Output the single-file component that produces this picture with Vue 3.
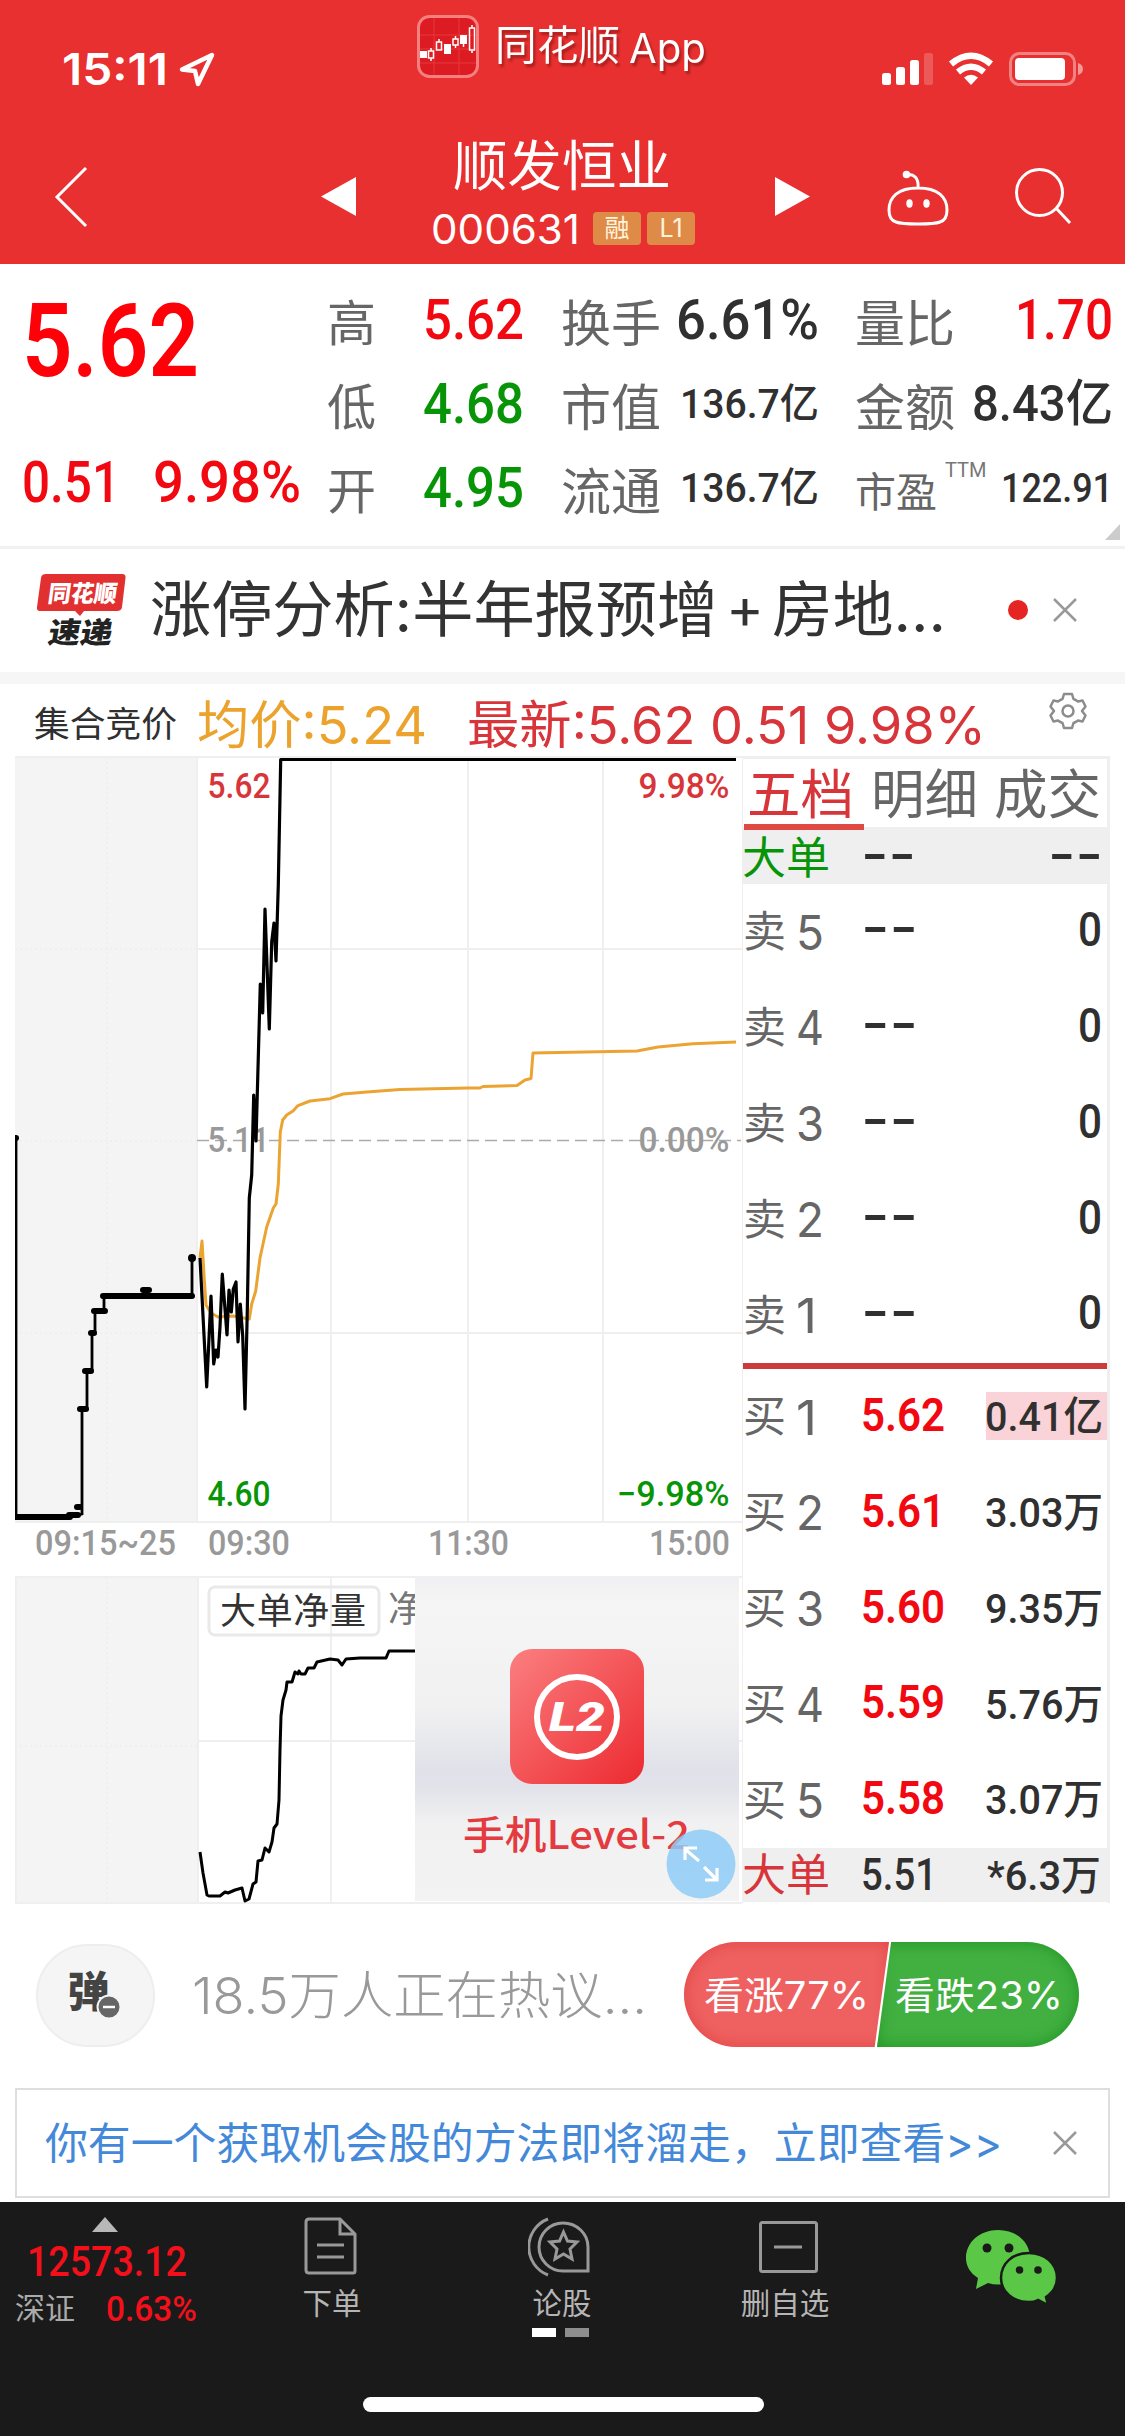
<script setup>
import { h } from 'vue'

// A line of text with a fixed advance width; the box is as tall as its capitals or ideographs.
const Fit = (props) => {
  const size = props.s
  const box = props.cjk ? size * 0.92 : size * 0.72
  const base = props.cjk ? size * 0.84 : size * 0.72
  return h('svg', { class: 'fit', width: props.w, height: box }, [
    h('text', {
      x: 0,
      y: base,
      'font-size': size,
      textLength: props.w,
      lengthAdjust: 'spacingAndGlyphs',
    }, props.t),
  ])
}
Fit.props = ['t', 'w', 's', 'cjk']

const groups = [
  [
    { k: '高', kw: 49, v: '5.62', w: 101, s: 56, c: 'up' },
    { k: '低', kw: 49, v: '4.68', w: 101, s: 56, c: 'down' },
    { k: '开', kw: 49, v: '4.95', w: 101, s: 56, c: 'down' },
  ],
  [
    { k: '换手', kw: 100, v: '6.61%', w: 143, s: 56, c: 'dark' },
    { k: '市值', kw: 100, v: '136.7亿', w: 139, s: 41, c: 'dark' },
    { k: '流通', kw: 100, v: '136.7亿', w: 139, s: 41, c: 'dark' },
  ],
  [
    { k: '量比', kw: 100, v: '1.70', w: 98, s: 56, c: 'up' },
    { k: '金额', kw: 100, v: '8.43亿', w: 141, s: 50, c: 'dark' },
    { k: '市盈', kw: 82, v: '122.91', w: 112, s: 41, c: 'dark', sup: 'TTM' },
  ],
]
const sells = [5, 4, 3, 2, 1]
const buys = [
  { n: 1, p: '5.62', v: '0.41亿', hot: true },
  { n: 2, p: '5.61', v: '3.03万' },
  { n: 3, p: '5.60', v: '9.35万' },
  { n: 4, p: '5.59', v: '5.76万' },
  { n: 5, p: '5.58', v: '3.07万' },
]
const steps = [[192, 1258, 4], [16, 1138, 3]]
const auction = 'M16 1138V1517H70L82 1514V1409H87V1371H92V1333H95V1311H104V1296H192V1258'
const flats = 'M16 1517H70M69 1515H78M77 1507H80M80 1409H86M85 1371H91M91 1333H94M94 1311H105M103 1296H192M143 1290H149'
const price = '200,1258 206.7,1387 211,1296 213.7,1364 216,1350 218,1357 220,1327 222.3,1274 227,1335 229,1290 231.3,1312 233.3,1289 236,1282 238,1342 240.3,1304 242.7,1336 245,1409 247.3,1310 249.3,1198 251.7,1175 253.7,1095 256,1141 258.3,1057 260.3,984 262.7,1013 265,909 267,965 269.3,1029 271.7,942 274,923 276,961 278.3,885 280.7,759.5 736,759.5'
const average = '200,1258 202,1241 204,1275 206,1305 211,1313 218,1317 233,1316 249.3,1319 251.7,1304 255.7,1291 260,1258 266.7,1227 273.3,1208 276,1204 278.3,1184 280.3,1132 282.7,1120 286.7,1115 293,1111 298,1105.6 310,1101 330,1098.7 343,1094 367,1092 400,1089.5 468,1088 480,1088 483,1086.5 517,1085.5 525,1080 531,1078.5 533,1053 637,1051 658,1047 693,1043.7 736,1042'
const netVolume = '200,1852 203,1873 207,1895 209,1896 220,1896 225,1892 228,1893 235,1890 242,1888 245,1901 249,1899 253,1884 256,1882 258,1861 262,1860 265,1848 269,1852 272,1842 274,1828 277,1824 279,1800 280,1750 281,1716 283,1700 286,1690 287,1682 292,1682 295,1672 298,1674 299,1671 301,1674 305,1674 308,1668 314,1668 317,1662 330,1659 338,1660 342,1665 346,1659 360,1658 386,1658 389,1651 415,1651'
</script>

<template>
  <div class="phone">
    <header class="top">
      <div class="status">
        <Fit class="clock" t="15:11" :w="106" :s="44" />
        <svg class="locate" width="38" height="38" viewBox="0 0 38 38"><path d="M34 4L4 18.500L17 20L20 33Z" /></svg>
        <div class="brand">
          <svg width="62" height="63" viewBox="0 0 62 63">
            <rect x="1.500" y="1.500" width="59" height="60" rx="11" fill="#dc1c22" stroke="#f68080" stroke-width="3" />
            <path d="M3 20H59M3 34H59M3 48H59M17 3V60M42 3V60" stroke="#e4383a" />
            <path d="M3 36h7v7h-7zM27 29h7v10h-7zM43 20h7v9h-7z" fill="#fff" />
            <path d="M11.500 36h5v7h-5zM19.500 27h5v8h-5zM36 24h5v6h-5zM52.500 13h5v22h-5zM14 33v3M14 43v3M22 24v3M38.500 21v3M38.500 30v3M55 10v3M55 35v3M46.500 29v3" fill="none" stroke="#fff" stroke-width="1.500" />
          </svg>
          <Fit class="brand-name" t="同花顺" :w="125" :s="41" cjk />
          <Fit class="brand-name app" t="App" :w="77" :s="41" />
        </div>
        <svg class="signals" width="204" height="38" viewBox="880 50 204 38">
          <g fill="#fff">
            <rect x="882" y="73" width="9" height="12" rx="2.500" /><rect x="896" y="67" width="9" height="18" rx="2.500" />
            <rect x="910" y="60" width="9" height="25" rx="2.500" /><rect x="924" y="53" width="9" height="32" rx="2.500" opacity=".2" />
            <rect x="1015" y="58" width="50" height="22" rx="4" /><path d="M1078 63q5 1.500 5 6t-5 6z" opacity=".5" />
            <path d="M971 85l-7-7.500q7-5.500 14 0z" />
          </g>
          <rect x="1010.500" y="53.500" width="64" height="31" rx="9" fill="none" stroke="#fff" stroke-opacity=".4" stroke-width="3" />
          <path d="M951 64Q971 47.500 991 64M958 72Q971 61.500 984 72" fill="none" stroke="#fff" stroke-width="6.500" />
        </svg>
      </div>
      <div class="nav">
        <svg width="36" height="64" viewBox="0 0 36 64" class="line"><path d="M33 3L4 32L33 61" /></svg>
        <svg class="prev" width="35" height="39" viewBox="0 0 35 39"><path d="M35 0V39L0 19.500Z" fill="#fff" /></svg>
        <div class="stock">
          <Fit t="顺发恒业" :w="218" :s="54" cjk />
          <div class="code">
            <Fit t="000631" :w="149" :s="41" />
            <span>融</span><span>L1</span>
          </div>
        </div>
        <svg class="next" width="35" height="39" viewBox="0 0 35 39"><path d="M0 0V39L35 19.500Z" fill="#fff" /></svg>
        <svg class="line bot" width="64" height="60" viewBox="886 168 64 60">
          <path d="M918 188C919 178 914 174 907 174.500M918 188C938 188 947 197 947 210Q947 220 940 222Q935 224 918 224Q901 224 896 222Q889 220 889 210C889 197 898 188 918 188Z" />
          <circle cx="906.500" cy="174.500" r="3.800" fill="#fff" stroke="none" /><ellipse cx="909.500" cy="203.500" rx="3.200" ry="4.200" fill="#fff" stroke="none" /><ellipse cx="926.500" cy="203.500" rx="3.200" ry="4.200" fill="#fff" stroke="none" />
        </svg>
        <svg class="line" width="60" height="60" viewBox="1014 167 60 60"><circle cx="1039.500" cy="192.500" r="23" /><path d="M1056 208L1070 223" /></svg>
      </div>
    </header>

    <section class="quote din">
      <div class="last up">
        <Fit t="5.62" :w="177" :s="102" class="semi" />
        <div class="delta"><Fit t="0.51" :w="98" :s="57" /><Fit t="9.98%" :w="148" :s="57" /></div>
      </div>
      <div v-for="(g, i) in groups" :key="i" class="group">
        <div v-for="r in g" :key="r.k" class="pair">
          <Fit class="label" :t="r.k" :w="r.kw" :s="r.kw / r.k.length" cjk />
          <small v-if="r.sup">{{ r.sup }}</small>
          <Fit :class="r.c" :t="r.v" :w="r.w" :s="r.s" />
        </div>
      </div>
      <i class="corner"></i>
    </section>

    <section class="news">
      <svg class="logo" width="90" height="78" viewBox="37 570 90 78">
        <path d="M46 573H122Q126 573 125.500 577L122 606Q121.500 610 117 610H84L80 615L75 610H40Q36.500 610 37 606L41 577Q41.500 573 46 573Z" fill="#e1302f" />
        <text x="0" y="0" transform="translate(47 601) skewX(-8)" class="mark" fill="#fff" font-size="23.500" textLength="69" lengthAdjust="spacingAndGlyphs">同花顺</text>
        <text x="0" y="0" transform="translate(47 641.500) skewX(-10)" class="mark" fill="#222" font-size="29" textLength="64" lengthAdjust="spacingAndGlyphs">速递</text>
      </svg>
      <div class="headline">
        <Fit t="涨停分析:半年报预增" :w="568" :s="61" cjk />
        <Fit t="+" :w="38" :s="56" cjk />
        <Fit t="房地..." :w="174" :s="61" cjk />
      </div>
      <i class="dot"></i>
      <svg class="x" width="24" height="24" viewBox="0 0 24 24"><path d="M1 1L23 23M23 1L1 23" /></svg>
    </section>

    <section class="legend">
      <Fit class="dark" t="集合竞价" :w="143" :s="35.700" cjk />
      <Fit class="avg" t="均价:5.24" :w="230" :s="52" cjk />
      <Fit class="now" t="最新:5.62 0.51 9.98%" :w="519" :s="52" cjk />
      <svg class="gear" width="38" height="38" viewBox="-19 -19 38 38">
        <path d="M-4 -17H4L5.500 -12Q8 -11 10 -9.500L14.500 -10.500L17.500 -4.500L14 0L17.500 4.500L14.500 10.500L10 9.500Q8 11 5.500 12L4 17H-4L-5.500 12Q-8 11 -10 9.500L-14.500 10.500L-17.500 4.500L-14 0L-17.500 -4.500L-14.500 -10.500L-10 -9.500Q-8 -11 -5.500 -12Z" />
        <circle r="5.500" />
      </svg>
    </section>

    <section class="market">
      <svg width="727" height="1150" viewBox="15 756 727 1150">
        <g fill="#f4f4f4"><rect x="15" y="756" width="182" height="766" /><rect x="15" y="1578" width="182" height="325" /></g>
        <g fill="none" stroke="#efefef" stroke-width="2">
          <path d="M15 757H742M197 949H742M197 1333H742M15 1522H742M197 756V1522M331 756V1522M468 756V1522M603 756V1522" />
          <path d="M15 1577H742M197 1741H742M15 1903H742M198 1577V1903M331 1577V1903M16 1577V1903" />
          <path d="M15 949H197M15 1141H197M15 1333H197M107 757V1522M15 1746H197M107 1577V1903" stroke-dasharray="2 3" />
        </g>
        <path d="M197 1140.500H741" stroke="#aaa" stroke-width="1.600" stroke-dasharray="12 6" />
        <polyline :points="average" fill="none" stroke="#eba432" stroke-width="3" stroke-linejoin="round" />
        <path :d="auction" fill="none" stroke="#000" stroke-width="2.800" />
        <path :d="flats" fill="none" stroke="#000" stroke-width="6" stroke-linecap="round" />
        <circle v-for="p in steps" :key="p[0]" :cx="p[0]" :cy="p[1]" :r="p[2]" />
        <g class="axis">
          <text x="207.500" y="798" class="now" textLength="63" lengthAdjust="spacingAndGlyphs">5.62</text>
          <text x="638.500" y="798" class="now" textLength="91" lengthAdjust="spacingAndGlyphs">9.98%</text>
          <text x="207.500" y="1152" textLength="62" lengthAdjust="spacingAndGlyphs">5.11</text>
          <text x="638.500" y="1152" textLength="91" lengthAdjust="spacingAndGlyphs">0.00%</text>
          <text x="207.500" y="1506" class="down" textLength="63" lengthAdjust="spacingAndGlyphs">4.60</text>
          <text x="617" y="1506" class="down" textLength="112.500" lengthAdjust="spacingAndGlyphs">−9.98%</text>
          <text x="35" y="1555" textLength="141" lengthAdjust="spacingAndGlyphs">09:15~25</text>
          <text x="208" y="1555" textLength="82" lengthAdjust="spacingAndGlyphs">09:30</text>
          <text x="428" y="1555" textLength="81" lengthAdjust="spacingAndGlyphs">11:30</text>
          <text x="649" y="1555" textLength="81" lengthAdjust="spacingAndGlyphs">15:00</text>
        </g>
        <polyline :points="price" fill="none" stroke="#000" stroke-width="3.200" stroke-linejoin="round" />
        <rect x="209" y="1587" width="170" height="48" rx="6" fill="none" stroke="#e9e9e9" stroke-width="3" />
        <g class="cn" font-size="36"><text x="220" y="1624" fill="#333" textLength="146">大单净量</text><text x="388" y="1622" fill="#777">净</text></g>
        <polyline :points="netVolume" fill="none" stroke="#000" stroke-width="3" stroke-linejoin="round" />
        <defs>
          <linearGradient id="haze" x1="0" y1="0" x2="0" y2="1">
            <stop offset="0" stop-color="#f0f0f2" /><stop offset=".08" stop-color="#f5f5f5" /><stop offset=".4" stop-color="#f1f1f2" />
            <stop offset=".6" stop-color="#e0e1e9" /><stop offset=".66" stop-color="#e3e4ea" /><stop offset=".76" stop-color="#f1f1f2" /><stop offset="1" stop-color="#f3f3f3" />
          </linearGradient>
          <linearGradient id="badge" x1="0" y1="0" x2="1" y2="1"><stop offset="0" stop-color="#fb7f80" /><stop offset="1" stop-color="#ec2a30" /></linearGradient>
        </defs>
        <rect x="415" y="1577" width="324" height="324" fill="url(#haze)" />
        <rect x="510" y="1649" width="134" height="135" rx="22" fill="url(#badge)" />
        <circle cx="577" cy="1717" r="40" fill="none" stroke="#fff" stroke-width="6" />
        <text x="549" y="1731" class="l2" textLength="56" lengthAdjust="spacingAndGlyphs">L2</text>
        <text x="463" y="1849" class="cn" fill="#e33b40" font-size="39" font-weight="500" textLength="227" lengthAdjust="spacingAndGlyphs">手机Level-2</text>
        <circle cx="701" cy="1864" r="34.500" fill="#8ecbf7" fill-opacity=".85" />
        <path d="M699 1861L685 1849M685 1860V1848H697M704 1867L717 1880M717 1868V1880H705" fill="none" stroke="#fff" stroke-width="3.200" />
      </svg>

      <div class="book din">
        <div class="tabs">
          <Fit class="tab now" t="五档" :w="107" :s="53.500" cjk />
          <Fit class="tab" t="明细" :w="107" :s="53.500" cjk />
          <Fit class="tab" t="成交" :w="107" :s="53.500" cjk />
          <i></i>
        </div>
        <div class="big first">
          <Fit class="label down" t="大单" :w="88" :s="44" cjk /><Fit class="dash dark" t="--" :w="55" :s="54" /><Fit class="dash dark vol" t="--" :w="55" :s="54" />
        </div>
        <div v-for="n in sells" :key="n" class="level">
          <Fit class="side" t="卖" :w="43" :s="43" cjk /><Fit class="num" :t="n" :w="n === 1 ? 21 : 28" :s="48" /><Fit class="dash dark" t="--" :w="57" :s="54" /><Fit class="vol dark zero" t="0" :w="24" :s="48" />
        </div>
        <div class="split"></div>
        <div v-for="b in buys" :key="b.n" class="level" :class="{ hot: b.hot }">
          <Fit class="side" t="买" :w="43" :s="43" cjk /><Fit class="num" :t="b.n" :w="b.n === 1 ? 21 : 28" :s="48" /><Fit class="semi up price" :t="b.p" :w="84" :s="47" /><span class="vol"><Fit class="dark" :t="b.v" :w="118" :s="41" /></span>
        </div>
        <div class="big">
          <Fit class="label now" t="大单" :w="88" :s="44" cjk /><Fit class="dark price" t="5.51" :w="76" :s="44" /><Fit class="dark vol" t="*6.3万" :w="114" :s="41" />
        </div>
      </div>
    </section>

    <section class="talk">
      <div class="round">
        <b>弹</b>
        <svg width="26" height="26" viewBox="-13 -13 26 26"><circle r="11.500" fill="#666" stroke="#f5f5f5" stroke-width="2" /><path d="M-6 0H6" stroke="#fff" stroke-width="2.500" /></svg>
      </div>
      <Fit class="topic" t="18.5万人正在热议..." :w="455" :s="51" cjk />
      <div class="vote">
        <div class="bull"><Fit t="看涨77%" :w="165" :s="38" cjk /></div>
        <div class="bear"><Fit t="看跌23%" :w="168" :s="38" cjk /></div>
      </div>
    </section>

    <section class="notice">
      <Fit t="你有一个获取机会股的方法即将溜走，立即查看>>" :w="957" :s="43" cjk />
      <svg class="x" width="24" height="24" viewBox="0 0 24 24"><path d="M1 1L23 23M23 1L1 23" /></svg>
    </section>

    <footer class="bar">
      <div class="tools">
        <div class="index din">
          <i></i>
          <Fit t="12573.12" :w="160" :s="42" />
          <div><Fit class="name" t="深证" :w="60" :s="30" cjk /><Fit t="0.63%" :w="91" :s="35" /></div>
        </div>
        <div class="tool order">
          <svg width="54" height="60" viewBox="304 2217 54 60"><path d="M309 2219H340L355 2234V2271Q355 2273 353 2273H309Q306 2273 306 2270V2222Q306 2219 309 2219ZM340 2220V2234H355M317 2245H344M317 2257H344" /></svg>
          <span>下单</span>
        </div>
        <div class="tool talkers">
          <svg width="64" height="60" viewBox="528 2217 64 60"><path d="M548 2219A30 30 0 0 0 548 2275M563 2223A24 24 0 1 0 563 2271H588V2247A25 24 0 0 0 563 2223ZM563.500 2232L567.500 2241L577 2242L570 2249L572 2259L563.500 2254L555 2259L557 2249L550 2242L559.500 2241Z" /></svg>
          <span>论股</span>
          <p><i></i><i></i></p>
        </div>
        <div class="tool remove">
          <svg width="60" height="60" viewBox="758 2217 60 60"><rect x="760.500" y="2222.500" width="56" height="49" rx="2" /><path d="M774 2247H802" /></svg>
          <span>删自选</span>
        </div>
        <svg class="wechat" width="94" height="78" viewBox="964 2228 94 78">
          <path d="M998 2230C980 2230 966 2242 966 2258C966 2266 970 2273 978 2278L976 2289L988 2283Q998 2286 1008 2283L1030 2262C1032 2244 1018 2230 998 2230Z" fill="#5ac846" />
          <path d="M1029 2253C1013 2253 1001 2263 1001 2278C1001 2292 1013 2302 1029 2302Q1034 2302 1038 2300L1048 2305L1046 2297C1052 2293 1057 2287 1057 2278C1057 2263 1044 2253 1029 2253Z" fill="#5ac846" stroke="#1a1a1a" stroke-width="2.500" />
          <g fill="#1a1a1a"><circle cx="987" cy="2248" r="4.500" /><circle cx="1009" cy="2248" r="4.500" /><circle cx="1019.500" cy="2270" r="3.800" /><circle cx="1038" cy="2270" r="3.800" /></g>
        </svg>
      </div>
      <div class="home"></div>
    </footer>
  </div>
</template>

<style>
body { margin: 0; background: #fff; }
</style>

<style scoped>
.phone { width: 1125px; height: 2436px; overflow: hidden; background: #fff; color: #333; font-family: Inter, "Noto Sans CJK SC", sans-serif; }
svg { display: block; flex: none; }
.fit { overflow: visible; fill: currentColor; }
.din { font-family: Roboto, "Noto Sans CJK SC", sans-serif; font-weight: 500; }
.semi { font-weight: 600; }
.up { color: #f20810; }
.down { color: #079507; fill: #079507; }
.dark { color: #303030; }
.now { color: #d8353a; fill: #d8353a; }
.avg { color: #eba32d; }
.x { fill: none; stroke: #999; stroke-width: 2.5; }

.top { height: 264px; background: #e83030; color: #fff; }
.status { display: flex; height: 120px; }
.clock { margin: 53px 0 0 62px; font-weight: 600; }
.locate { margin: 51px 0 0 10px; fill: none; stroke: #fff; stroke-width: 4.5; stroke-linejoin: round; }
.brand { display: flex; margin: 15px 0 0 201px; width: 463px; }
.brand-name { margin: 15px 0 0 16px; filter: drop-shadow(2px 3px 1px #8a1515aa); }
.app { margin: 18px 0 0 9px; font-weight: 400; }
.signals { margin-top: 50px; }
.nav { display: flex; height: 144px; align-items: flex-start; }
.nav > svg:first-child { margin: 45px 0 0 53px; }
.line { fill: none; stroke: #fff; stroke-width: 3; }
.nav .prev { margin: 57px 0 0 232px; }
.stock { display: flex; flex-direction: column; align-items: center; width: 264px; margin: 27px 0 0 74px; }
.code { display: flex; align-items: center; height: 34px; margin-top: 22px; gap: 6px; }
.code .fit { margin: 8px 7px 0 2px; }
.code span { width: 48px; height: 33px; margin-top: 8px; border-radius: 4px; background: #df8b48; font-size: 25px; line-height: 33px; text-align: center; color: #fff3dc; }
.nav .next { margin: 57px 0 0 81px; }
.nav .bot { margin: 48px 64px 0 76px; }
.nav > svg:last-child { margin-top: 47px; }

.quote { display: flex; height: 285px; position: relative; border-bottom: 3px solid #f1f1f1; box-sizing: border-box; }
.last { width: 305px; padding: 39px 0 0 22px; }
.last > .fit { color: #ff0008; }
.delta { display: flex; gap: 33px; margin-top: 85px; }
.group { width: 194px; padding-top: 13px; }
.group:nth-child(3) { width: 255px; margin-left: 40px; }
.group:nth-child(4) { width: 255px; margin-left: 39px; }
.pair { display: flex; height: 84px; align-items: center; justify-content: space-between; }
.pair .fit:last-child { margin-right: -3px; }
.pair .label { margin-top: 9px; }
.label { color: #666; font-weight: 400; }
.pair small { margin: -34px auto 0 8px; font: 400 20px Roboto, sans-serif; color: #777; }
.corner { position: absolute; right: 5px; bottom: 6px; width: 15px; height: 16px; background: #ccc; clip-path: polygon(100% 0, 100% 100%, 0 100%); }

.news { display: flex; height: 123px; align-items: center; padding: 0 48px 2px 37px; box-sizing: border-box; }
.logo { overflow: visible; }
.mark { font-family: "Noto Sans CJK SC", sans-serif; font-weight: 900; }
.headline { display: flex; gap: 8px; margin-left: 23px; }
.dot { width: 20px; height: 20px; margin: 0 25px 0 auto; border-radius: 50%; background: #e52424; }

.legend { display: flex; align-items: center; height: 84px; padding: 8px 0 0 34px; box-sizing: border-box; border-top: 12px solid #f6f6f6; }
.legend .avg { margin: 4px 0 0 20px; }
.legend .fit.now { margin: 4px 0 0 40px; }
.gear { margin: -27px 0 0 63px; fill: none; stroke: #8c8c8c; stroke-width: 2.5; stroke-linejoin: round; }

.market { display: flex; height: 1150px; margin-left: 15px; }
.axis { font: 500 35px Roboto, sans-serif; fill: #999; }
.cn { font-family: "Noto Sans CJK SC", sans-serif; }
.l2 { font: italic 900 41px Roboto, sans-serif; fill: #fff; }
.book { width: 368px; height: 1147px; box-sizing: border-box; border: 3px solid #efefef; border-left-width: 1px; border-bottom: 0; }
.tabs { display: flex; height: 68px; padding: 16px 6px 0 4px; box-sizing: border-box; justify-content: space-between; position: relative; font-weight: 400; }
.tab:not(.now) { color: #666; }
.tabs i { position: absolute; left: 1px; bottom: -3px; width: 120px; height: 6px; background: #e14a42; }
.big { display: flex; align-items: center; height: 54px; background: #efefef; padding-right: 7px; }
.big .label { margin-left: -1px; }
.first { height: 57px; }
.first .label { margin-top: 5px; }
.big .label.down { color: #079507; }
.big .label.now { color: #d8353a; }
.big .dash { margin: -4px 0 0 31px; }
.big .vol { margin: 0 -1px 0 auto; }
.big .dash.vol { margin: -4px -3px 0 auto; }
.big .price { margin: -3px 0 0 31px; }
.level { display: flex; align-items: center; height: 95.8px; }
.side { color: #666; font-weight: 400; }
.num { width: 28px; color: #666; font-weight: 400; margin: 0 0 0 10px; font-family: Inter, sans-serif; }
.dash { font-family: Inter, sans-serif; font-weight: 500; margin: -10px 0 0 37px; }
.level .price { margin: -6px 0 0 37px; }
.vol { margin: -4px 6px 0 auto; }
.zero { margin-top: -7px; margin-right: 5px; }
span.vol { display: flex; align-items: center; justify-content: flex-end; width: 121px; height: 48px; margin: -2px 0 0 auto; padding-right: 4px; box-sizing: border-box; }
.hot span.vol { background: #f9d3d7; }
.split { height: 6px; background: #cd3a3c; }

.talk { display: flex; height: 182px; padding: 36px 0 0 36px; box-sizing: border-box; align-items: flex-start; }
.round { display: flex; align-items: center; justify-content: center; width: 119px; height: 103px; margin-top: 2px; border: 2px solid #eee; border-radius: 52px; background: #f5f5f5; box-sizing: border-box; position: relative; }
.round b { font-size: 42px; line-height: 50px; margin: -8px 14px 0 0; color: #444; font-weight: 900; }
.round svg { position: absolute; left: 58px; top: 48px; }
.topic { margin: 35px 0 0 37px; color: #999; font-weight: 300; }
.vote { display: flex; margin-left: 37px; color: #fff; }
.vote > div { height: 105px; display: flex; align-items: center; box-sizing: border-box; padding-top: 2px; }
.bull { width: 205px; padding-left: 20px; background: #ef6161; border-radius: 54px 0 0 54px; box-shadow: inset 0 0 16px #dc3636aa; clip-path: polygon(0 0, 100% 0, 93% 100%, 0 100%); }
.bear { width: 202px; margin-left: -12px; padding-left: 18px; background: #41b041; border-radius: 0 54px 54px 0; box-shadow: inset 0 0 16px #108610aa; clip-path: polygon(7% 0, 100% 0, 100% 100%, 0 100%); }

.notice { display: flex; align-items: center; justify-content: space-between; width: 1095px; height: 110px; margin-left: 15px; padding: 0 31px 0 28px; box-sizing: border-box; border: 2px solid #dedede; color: #4489d9; }

.bar { height: 238px; margin-top: 4px; background: #1a1a1a; }
.tools { display: flex; height: 195px; }
.index { width: 190px; padding: 15px 0 0 15px; color: #f4101a; }
.index > i { display: block; width: 26px; height: 15px; margin-left: 77px; background: #b8b8b8; clip-path: polygon(50% 0, 100% 100%, 0 100%); }
.index > .fit { margin: 14px 0 0 12px; }
.index > div { display: flex; align-items: center; height: 30px; margin-top: 17px; gap: 31px; }
.name { color: #aaa; font-weight: 400; }
.tool { display: flex; flex-direction: column; align-items: center; width: 120px; padding-top: 15px; color: #b5b5b5; }
.tool svg { fill: none; stroke: #999; stroke-width: 3; }
.tool span { height: 44px; margin-top: 4px; font-size: 29.500px; line-height: 44px; }
.order { margin-left: 67px; }
.order svg { margin-left: -3px; }
.talkers { margin-left: 110px; }
.talkers svg { margin-left: -4px; }
.remove { margin-left: 103px; }
.remove svg { margin-left: 6px; }
.tool p { display: flex; gap: 9px; margin: 3px 3px 0 0; }
.tool p i { width: 24px; height: 9px; background: #fff; }
.tool p i + i { background: #8e8e8e; }
.wechat { margin: 26px 0 0 119px; }
.home { width: 401px; height: 15px; margin-left: 363px; border-radius: 8px; background: #fff; }
</style>
